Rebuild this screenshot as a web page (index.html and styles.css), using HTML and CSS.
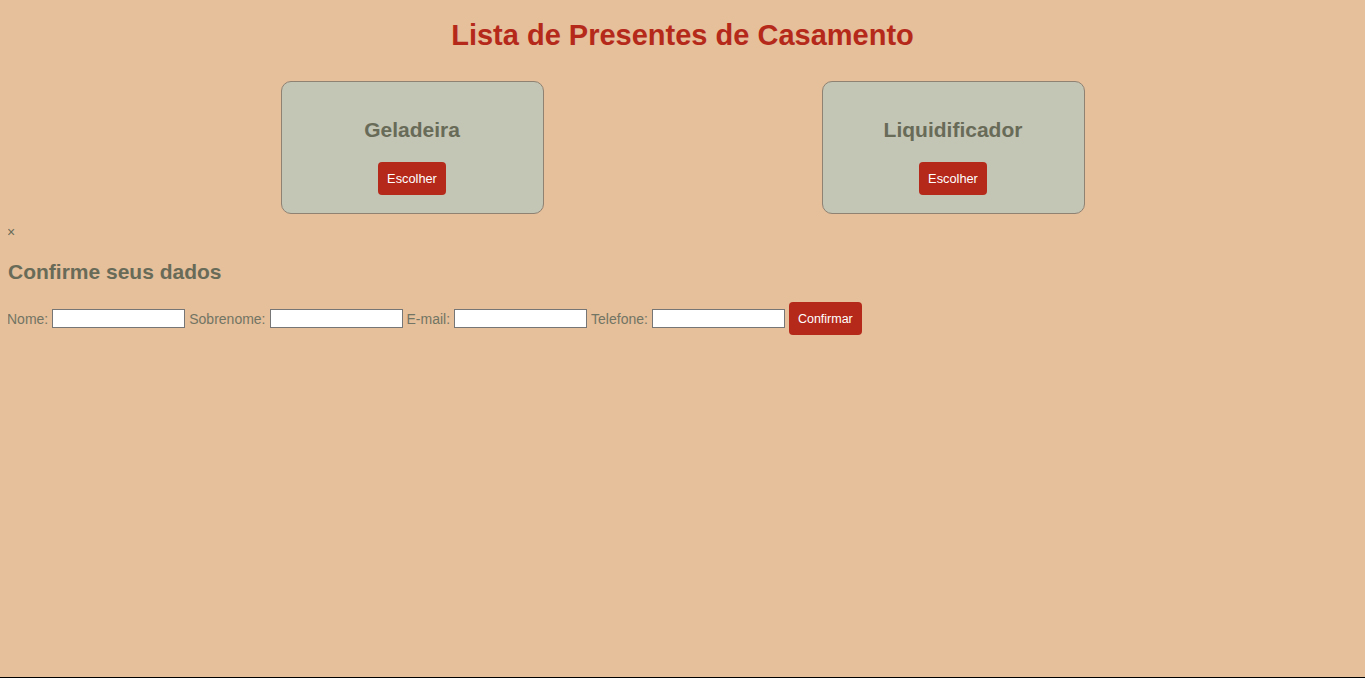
FILE: index.html
```html
<!DOCTYPE html>
<html lang="pt">
<head>
<meta charset="utf-8">
<title>Lista de Presentes de Casamento</title>
<link rel="stylesheet" href="styles.css">
</head>
<body>
<h1 class="title">Lista de Presentes de Casamento</h1>
<div class="gifts">
  <div class="card">
    <h2 class="card-name">Geladeira</h2>
    <button class="btn">Escolher</button>
  </div>
  <div class="card">
    <h2 class="card-name">Liquidificador</h2>
    <button class="btn">Escolher</button>
  </div>
</div>
<div class="modal">
  <span class="close">&times;</span>
  <h2 class="modal-title">Confirme seus dados</h2>
  <form class="form">
    <label>Nome:</label> <input type="text" class="field"> <label>Sobrenome:</label> <input type="text" class="field"> <label>E-mail:</label> <input type="email" class="field"> <label>Telefone:</label> <input type="tel" class="field"> <button type="button" class="btn btn-confirm">Confirmar</button>
  </form>
</div>
</body>
</html>
```
FILE: styles.css
```css
html {
  height: 100%;
  box-sizing: border-box;
  border-bottom: 1px solid #000;
  background: #e6bf9b;
}
body {
  margin: 8px;
  font-family: "Liberation Sans", Arial, sans-serif;
  color: #686b58;
}
.title {
  text-align: center;
  color: #b5291a;
  font-size: 29px;
  font-weight: bold;
  margin: 11px 0 29px;
}
.gifts {
  display: flex;
  justify-content: center;
  gap: 278px;
}
.card {
  width: 261px;
  height: 131px;
  background: #c3c5b5;
  border: 1px solid #8f8272;
  border-radius: 10px;
  display: flex;
  flex-direction: column;
  align-items: center;
}
.card-name {
  font-size: 21px;
  font-weight: bold;
  margin: 36px 0 20px;
  line-height: 24px;
}
.btn {
  background: #b5291a;
  color: #fff;
  border: none;
  border-radius: 4px;
  font-family: "Liberation Sans", Arial, sans-serif;
  font-size: 12.8px;
  padding: 0 9px;
  height: 33px;
  cursor: pointer;
}
.modal {
  margin-top: 10px;
}
.close {
  font-size: 14px;
  display: block;
  line-height: 16px;
  margin-left: -1px;
}
.modal-title {
  font-size: 21px;
  font-weight: bold;
  margin: 20px 0 18px;
}
.form {
  font-size: 14px;
  color: #727563;
  display: flex;
  align-items: center;
  gap: 4px;
  margin-left: -1px;
}
.field {
  width: 133px;
  height: 19px;
  box-sizing: border-box;
  border: 1px solid #767676;
  background: #fff;
  padding: 0 2px;
  margin: 0;
}
.btn-confirm {
  font-size: 12.5px;
}
```
